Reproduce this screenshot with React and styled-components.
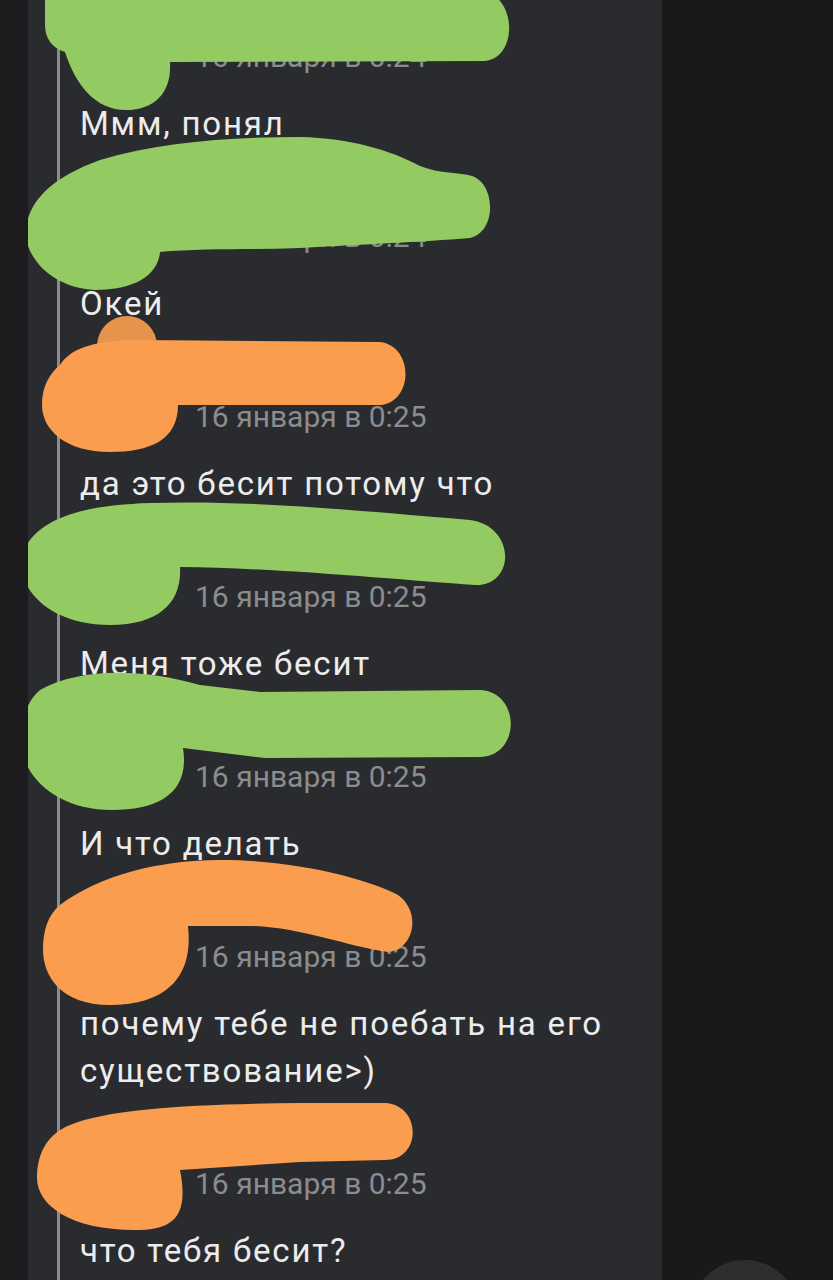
import React from "react";
import styled, { createGlobalStyle } from "styled-components";

const GlobalStyle = createGlobalStyle`
  html, body {
    margin: 0;
    padding: 0;
    background: #19191a;
  }
  body {
    font-family: Roboto, "Noto Sans", "Liberation Sans", sans-serif;
    -webkit-font-smoothing: antialiased;
  }
`;

const Screen = styled.div`
  display: flex;
  width: 833px;
  height: 1280px;
  overflow: hidden;
  background: #19191a;
`;

const Gutter = styled.div`
  width: 28px;
  flex-shrink: 0;
  background: #1c1c1e;
`;

const Panel = styled.div`
  width: 634px;
  flex-shrink: 0;
  background: #2a2b2e;
  padding-left: 29px;
  box-sizing: border-box;
  overflow: hidden;
`;

const Thread = styled.div`
  border-left: 3px solid #8a8b8d;
  padding-left: 20px;
  min-height: calc(100% + 20px);
  display: flex;
  flex-direction: column;
  gap: 28px;
  margin-top: -5px;
`;

const Message = styled.div`
  position: relative;
`;

const Header = styled.div`
  display: flex;
  flex-direction: column;
  padding-left: 115px;
`;

const NameSlot = styled.div`
  height: 44px;
`;

const Time = styled.div`
  height: 36px;
  line-height: 36px;
  font-size: 30px;
  color: #8b8c8f;
  white-space: nowrap;
`;

const Body = styled.div`
  margin-top: 25px;
  font-size: 33px;
  letter-spacing: 1.8px;
  line-height: 47px;
  color: #ececed;
  padding-right: 10px;
`;

const Scribble = styled.svg`
  position: absolute;
  top: 0;
  left: -80px;
  width: 833px;
  height: 260px;
  overflow: visible;
  pointer-events: none;
`;

const Side = styled.div`
  flex: 1;
  position: relative;
  background: #19191a;
`;

const Fab = styled.div`
  position: absolute;
  left: 29px;
  top: 1260px;
  width: 108px;
  height: 108px;
  border-radius: 50%;
  background: #2d2e30;
`;

const GREEN = "#94ca62";
const ORANGE = "#fa9d4e";

const messages = [
  {
    time: "16 января в 0:24",
    text: "Ммм, понял",
    shift: -5,
    color: GREEN,
    d: "M 45 -10 L 480 -10 C 518 -5 518 58 485 61 L 170 62 C 172 92 155 110 126 110 C 96 110 76 86 65 52 C 52 48 45 38 45 25 Z",
  },
  {
    time: "16 января в 0:24",
    text: "Окей",
    shift: 175,
    color: GREEN,
    d: "M 25 233 C 28 205 45 180 100 160 C 160 142 230 137 300 137 C 350 138 390 150 420 166 C 440 174 460 172 472 176 C 496 184 497 232 470 238 C 420 242 370 244 300 248 C 250 250 200 248 160 252 C 158 275 135 290 95 290 C 55 288 28 262 25 233 Z",
  },
  {
    time: "16 января в 0:25",
    text: "да это бесит потому что",
    shift: 355,
    color: ORANGE,
    extra: { cx: 127, cy: 346, r: 30, fill: "#e6934c" },
    d: "M 60 365 C 72 346 100 340 140 340 L 380 342 C 414 346 414 402 380 405 L 178 405 C 178 440 150 452 110 452 C 66 452 42 430 42 405 C 42 386 50 373 60 365 Z",
  },
  {
    time: "16 января в 0:25",
    text: "Меня тоже бесит",
    shift: 535,
    color: GREEN,
    d: "M 30 540 C 50 515 90 505 150 503 C 250 500 350 510 470 520 C 516 526 516 586 475 585 C 400 580 280 568 180 567 C 182 602 160 625 110 625 C 55 625 22 595 22 565 C 22 555 25 547 30 540 Z",
  },
  {
    time: "16 января в 0:25",
    text: "И что делать",
    shift: 715,
    color: GREEN,
    d: "M 40 690 C 80 668 140 668 200 685 L 260 692 L 480 690 C 521 692 521 756 480 757 L 265 758 L 183 748 C 190 792 160 810 112 810 C 55 810 21 775 21 740 C 21 718 28 700 40 690 Z",
  },
  {
    time: "16 января в 0:25",
    text: "почему тебе не поебать на его существование>)",
    shift: 895,
    color: ORANGE,
    d: "M 60 905 C 100 875 160 860 220 860 C 300 860 370 880 398 895 C 422 912 414 950 388 952 C 345 946 300 927 250 926 L 188 926 C 195 990 150 1005 110 1005 C 60 1005 43 975 43 950 C 43 930 48 915 60 905 Z",
  },
  {
    time: "16 января в 0:25",
    text: "что тебя бесит?",
    shift: 1122,
    color: ORANGE,
    d: "M 70 1125 C 110 1108 200 1104 300 1103 L 385 1103 C 422 1105 422 1160 385 1160 L 300 1162 L 180 1170 C 190 1220 170 1230 135 1230 C 70 1230 37 1205 37 1178 C 37 1150 50 1133 70 1125 Z",
  },
];

const App = () => {
  return (
    <>
      <GlobalStyle />
      <Screen>
        <Gutter />
        <Panel>
          <Thread>
            {messages.map((m, i) => (
              <Message key={i}>
                <Header>
                  <NameSlot />
                  <Time>{m.time}</Time>
                </Header>
                <Body>{m.text}</Body>
                <Scribble viewBox="0 0 833 260">
                  <g transform={`translate(0 ${-m.shift})`}>
                    {m.extra && (
                      <circle cx={m.extra.cx} cy={m.extra.cy} r={m.extra.r} fill={m.extra.fill} />
                    )}
                    <path d={m.d} fill={m.color} />
                  </g>
                </Scribble>
              </Message>
            ))}
          </Thread>
        </Panel>
        <Side>
          <Fab />
        </Side>
      </Screen>
    </>
  );
};

export default App;
